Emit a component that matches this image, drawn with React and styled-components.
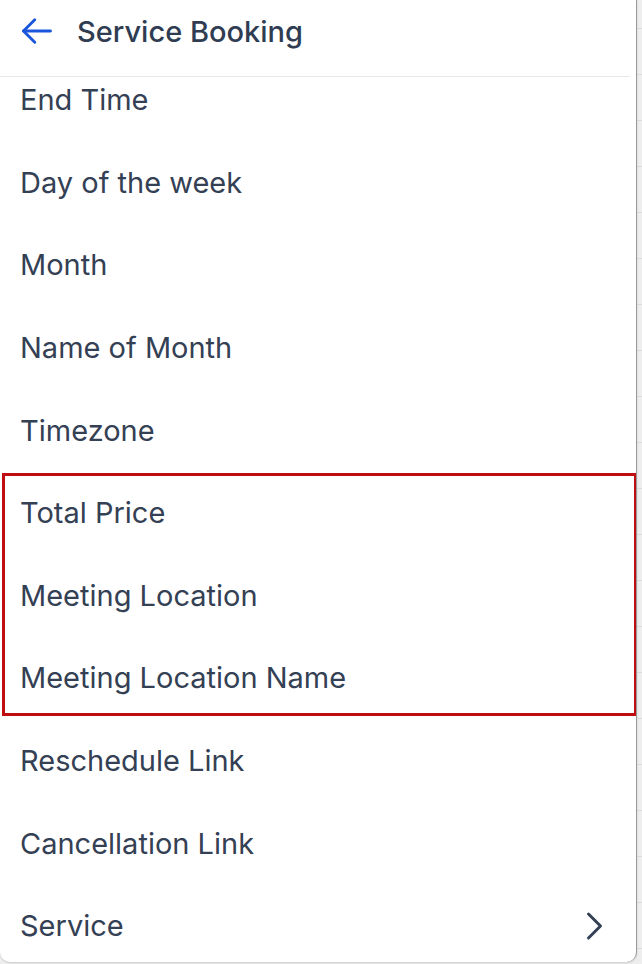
import React from "react";
import styled, { createGlobalStyle } from "styled-components";

const GlobalStyle = createGlobalStyle`
  html, body {
    margin: 0;
    padding: 0;
    background: #ededed;
    font-family: Inter, "Noto Sans", "Liberation Sans", sans-serif;
  }
`;

const before = ["End Time", "Day of the week", "Month", "Name of Month", "Timezone"];
const highlighted = ["Total Price", "Meeting Location", "Meeting Location Name"];
const after = ["Reschedule Link", "Cancellation Link"];

export default function App() {
  return (
    <>
      <GlobalStyle />
      <Page>
        <Panel>
          <Header>
            <BackButton aria-label="Back">
              <svg width="36" height="36" viewBox="0 0 24 24" fill="none" stroke="#1a56db" strokeWidth="1.9" strokeLinecap="round" strokeLinejoin="round">
                <path d="M21 12H3" />
                <path d="M10.5 4.5L3 12l7.5 7.5" />
              </svg>
            </BackButton>
            <Title>Service Booking</Title>
          </Header>
          <Viewport>
            <List>
              {before.map((x) => (
                <Row key={x}>{x}</Row>
              ))}
              <Highlight>
                {highlighted.map((x) => (
                  <Row key={x}>{x}</Row>
                ))}
              </Highlight>
              {after.map((x) => (
                <Row key={x}>{x}</Row>
              ))}
              <Row>
                Service
                <svg width="36" height="36" viewBox="0 0 24 24" fill="none" stroke="#344054" strokeWidth="2" strokeLinecap="round" strokeLinejoin="round">
                  <path d="M9 4l8 8-8 8" />
                </svg>
              </Row>
            </List>
          </Viewport>
        </Panel>
      </Page>
    </>
  );
}

const Page = styled.div`
  width: 642px;
  height: 964px;
  overflow: hidden;
  background: repeating-linear-gradient(
    #eeeeee 0 28px,
    #dcdcdc 28px 29px,
    #eeeeee 29px 46px
  );
`;

const Panel = styled.div`
  width: 637px;
  height: 962px;
  background: #ffffff;
  border-right: 1px solid #9a9a9a;
  border-radius: 0 0 10px 10px;
  box-shadow: 0 1px 2px rgba(0, 0, 0, 0.15);
  display: flex;
  flex-direction: column;
  overflow: hidden;
  box-sizing: border-box;
`;

const Header = styled.div`
  height: 77px;
  flex-shrink: 0;
  margin-right: 6px;
  border-bottom: 1.5px solid #e6e7eb;
  display: flex;
  align-items: center;
  padding-left: 19px;
  gap: 22px;
  box-sizing: border-box;
  padding-bottom: 14px;
`;

const BackButton = styled.button`
  border: none;
  background: none;
  padding: 0;
  display: flex;
  align-items: center;
`;

const Title = styled.div`
  font-size: 29px;
  font-weight: 500;
  color: #2f3c52;
`;

const Viewport = styled.div`
  flex: 1;
  overflow: hidden;
`;

const List = styled.div`
  margin-top: -18.5px;
  display: flex;
  flex-direction: column;
`;

const Highlight = styled.div`
  position: relative;
  display: flex;
  flex-direction: column;

  &::after {
    content: "";
    position: absolute;
    top: 2px;
    bottom: 3px;
    left: 2px;
    right: -1px;
    border: 3px solid #c00d12;
    pointer-events: none;
  }
`;

const Row = styled.div`
  height: 82.6px;
  flex-shrink: 0;
  display: flex;
  align-items: center;
  justify-content: space-between;
  padding: 0 25px 0 20px;
  font-size: 29px;
  color: #344054;
  box-sizing: border-box;
`;
